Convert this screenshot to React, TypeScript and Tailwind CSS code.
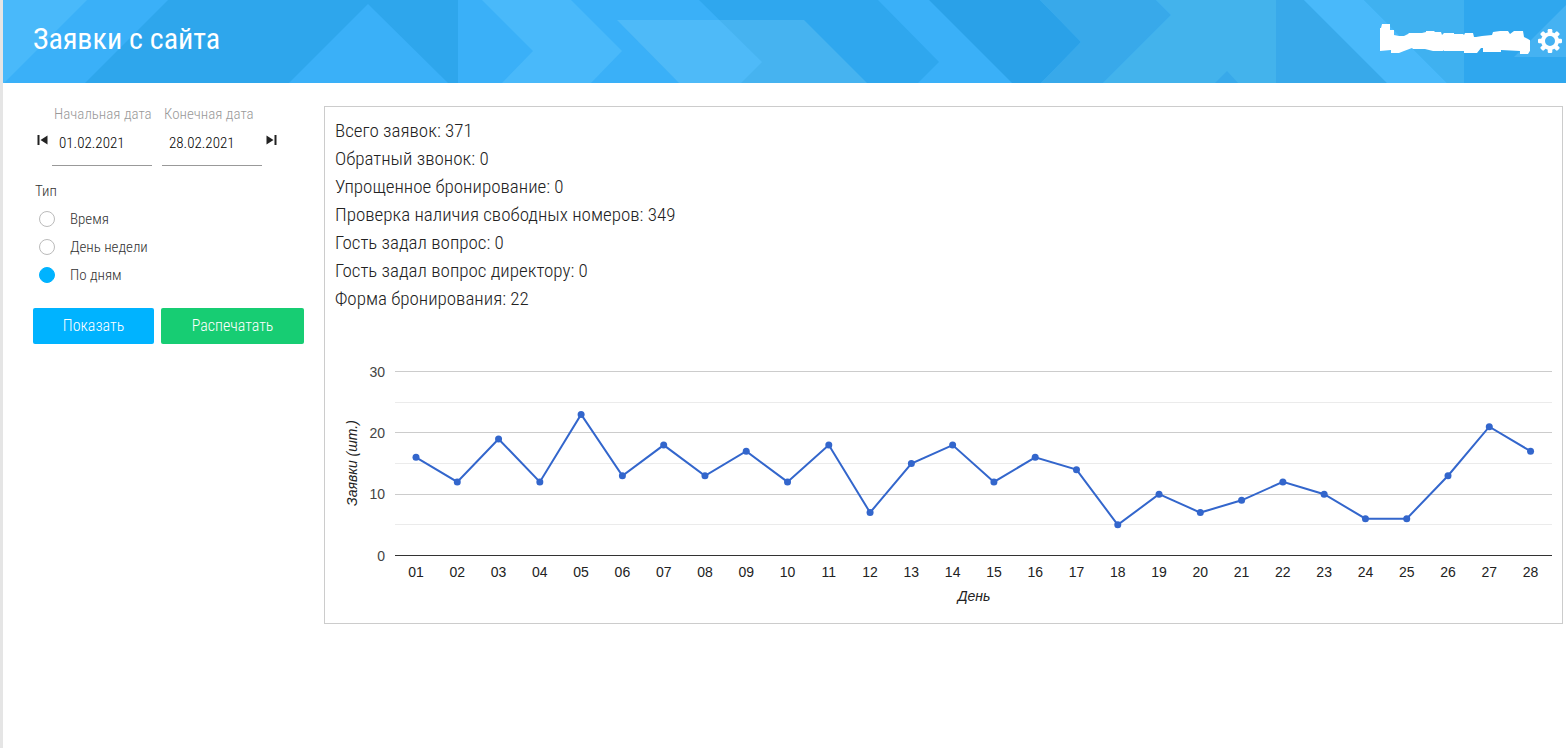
import { useState } from "react";

const stats = [
  { label: "Всего заявок", value: 371 },
  { label: "Обратный звонок", value: 0 },
  { label: "Упрощенное бронирование", value: 0 },
  { label: "Проверка наличия свободных номеров", value: 349 },
  { label: "Гость задал вопрос", value: 0 },
  { label: "Гость задал вопрос директору", value: 0 },
  { label: "Форма бронирования", value: 22 },
];

const types = [
  { id: "time", label: "Время" },
  { id: "weekday", label: "День недели" },
  { id: "days", label: "По дням" },
];

const requests = [
  16, 12, 19, 12, 23, 13, 18, 13, 17, 12, 18, 7, 15, 18, 12, 16, 14, 5, 10, 7,
  9, 12, 10, 6, 6, 13, 21, 17,
];

export default function App() {
  return (
    <div className="min-h-screen border-l-3 border-[#e5e5e5] bg-white font-['Roboto_Condensed','Liberation_Sans_Narrow',Roboto,sans-serif] font-light text-[#333]">
      <Header />
      <main className="flex items-start gap-5 pt-[23px] pr-[3px] pl-[30px]">
        <Filters />
        <section className="min-w-0 flex-1 border border-[#ccc]">
          <ul className="px-2.5 pt-2.5 text-[19px] leading-7 text-[#222]">
            {stats.map((s) => (
              <li key={s.label}>
                {s.label}: {s.value}
              </li>
            ))}
          </ul>
          <Chart />
        </section>
      </main>
    </div>
  );
}

function Header() {
  return (
    <header className="relative flex h-[83px] items-center justify-between overflow-hidden bg-[#3ab0f8] pr-1 pl-[30px] text-white">
      <HeaderPattern />
      <h1 className="relative pb-1.5 text-[30px] leading-9 font-normal">
        Заявки с сайта
      </h1>
      <div className="relative flex items-center gap-2 pb-0.5">
        <svg width="150" height="35" viewBox="0 0 150 35" fill="#fff">
          <path d="M0 5h1l1-4h8v6h4v5l5 1h5l4-2 1-1h13l4-1V8h8l1 1h6l1 3 2-2h10v1h9l1 1 1-2h8l1 4h2l6-1 10-1 1-3 7-1h8l2 3 4-3h9l1 6 4 2 3 2v8l-3 5h-8v-3l-19-1v2h-18v-4h-2l-4 5H84v-2H64v-1l-1 1H53l-8-2H33l-1-1-8 3-5 2h-8v-3l-11 1z" />
        </svg>
        <button type="button" aria-label="Настройки">
          <svg width="24" height="24" viewBox="-12 -12 24 24" fill="#fff">
            {[0, 45, 90, 135, 180, 225, 270, 315].map((a) => (
              <rect
                key={a}
                x="-2.3"
                y="-12"
                width="4.6"
                height="5"
                rx="1.2"
                transform={`rotate(${a})`}
              />
            ))}
            <circle r="7" fill="none" stroke="#fff" strokeWidth="4" />
          </svg>
        </button>
      </div>
    </header>
  );
}

function HeaderPattern() {
  return (
    <svg
      className="absolute inset-0 h-full w-full"
      viewBox="3 0 1563 83"
      preserveAspectRatio="xMinYMin slice"
      aria-hidden="true">
      <path fill="#49b9fa" d="M3 0h84L4 83H3z" />
      <path fill="#2ea6ec" d="M168 0h290v83H85z" />
      <path fill="#3ab0f8" d="M368 4l80 79H289z" />
      <path fill="#49b9fa" d="M482 0h89l51 51-31 32h-89l31-32z" />
      <path fill="#2fa7ee" d="M699 0h179l61 62-21 21H741l21-21z" />
      <path fill="#8ad8f8" fillOpacity=".25" d="M617 20h187l63 63H679z" />
      <path fill="#2aa1e8" d="M929 0h111l41 42-40 41h-29z" />
      <path fill="#38a9ea" d="M1040 0h116l15 15-68 68h-62l40-41z" />
      <path fill="#43b3ec" d="M1156 0h120v83h-173l68-68z" />
      <path fill="#38a9ea" d="M1227 71l11 12h-23z" />
      <path fill="#38a9ea" d="M1276 0h28l83 83h-111z" />
      <path fill="#49b9fa" d="M1304 0h60l83 83h-60z" />
      <path fill="#3fb1f0" d="M1364 0h100v83h-17z" />
      <path fill="#2fa7ee" d="M1464 0h102v83h-102z" />
      <path fill="#45b2f2" d="M1514 57l52-52v52z" />
    </svg>
  );
}

function Filters() {
  const [from, setFrom] = useState("01.02.2021");
  const [to, setTo] = useState("28.02.2021");
  const [type, setType] = useState("days");

  return (
    <form
      className="w-[271px] shrink-0 text-[15px]"
      onSubmit={(e) => e.preventDefault()}>
      <div className="flex items-center">
        <button type="button" aria-label="Назад" className="w-[19px] pt-2 pl-1">
          <svg width="12" height="12" viewBox="0 0 12 12" fill="#222">
            <path d="M.5 1h2v10h-2zM10.5 1.5v9L3.5 6z" />
          </svg>
        </button>
        <DateField id="from" label="Начальная дата" value={from} onChange={setFrom} />
        <div className="w-2.5" />
        <DateField id="to" label="Конечная дата" value={to} onChange={setTo} />
        <button type="button" aria-label="Вперед" className="pt-2 pl-1">
          <svg width="12" height="12" viewBox="0 0 12 12" fill="#222">
            <path d="M8.5 1h2v10h-2zM.5 1.5v9L7.5 6z" />
          </svg>
        </button>
      </div>

      <fieldset className="mt-4">
        <legend className="pl-0.5 leading-[18px]">Тип</legend>
        <div className="mt-[5px]">
          {types.map((t) => (
            <label key={t.id} className="flex h-7 items-center gap-[15px] pl-1.5">
              <input
                type="radio"
                name="type"
                checked={type === t.id}
                onChange={() => setType(t.id)}
                className="size-4 appearance-none rounded-full border border-[#bbb] checked:border-[#00b3ff] checked:bg-[#00b3ff]"
              />
              {t.label}
            </label>
          ))}
        </div>
      </fieldset>

      <div className="mt-[19px] flex gap-[7px] text-base text-white">
        <button type="submit" className="h-9 w-[121px] rounded-xs bg-[#00b3ff]">
          Показать
        </button>
        <button type="button" className="h-9 flex-1 rounded-xs bg-[#17cd73]">
          Распечатать
        </button>
      </div>
    </form>
  );
}

const DateField = ({
  id,
  label,
  value,
  onChange,
}: {
  id: string;
  label: string;
  value: string;
  onChange: (value: string) => void;
}) => {
  return (
    <div className="w-[100px]">
      <label
        htmlFor={id}
        className="block pl-0.5 leading-4 whitespace-nowrap text-[#999]">
        {label}
      </label>
      <input
        id={id}
        type="text"
        value={value}
        onChange={(e) => onChange(e.target.value)}
        className="block h-11 w-full border-b border-[#999] pb-0.5 pl-[7px] text-black outline-none"
      />
    </div>
  );
};

function Chart() {
  const left = 70;
  const right = 1227;
  const bottom = 235;
  const step = 41.28;
  const x = (i: number) => left + 21 + step * i;
  const y = (v: number) => bottom + 0.5 - (v * 184) / 30;

  return (
    <svg
      viewBox="0 0 1237 303"
      className="mt-[7px] block w-full font-['Liberation_Sans',Arial,sans-serif] text-[14px] font-normal"
      role="img"
      aria-label="Заявки по дням">
      {[5, 10, 15, 20, 25, 30].map((v) => (
        <rect
          key={v}
          x={left}
          y={Math.floor(y(v))}
          width={right - left}
          height="1"
          fill={v % 10 ? "#ebebeb" : "#ccc"}
        />
      ))}
      <rect x={left} y={bottom} width={right - left} height="1" fill="#333" />
      {[0, 10, 20, 30].map((v) => (
        <text key={v} x={left - 10} y={y(v) + 5} textAnchor="end" fill="#444">
          {v}
        </text>
      ))}
      {requests.map((_, i) => (
        <text key={i} x={x(i)} y="257" textAnchor="middle" fill="#222">
          {String(i + 1).padStart(2, "0")}
        </text>
      ))}
      <polyline
        points={requests.map((v, i) => `${x(i)},${y(v)}`).join(" ")}
        fill="none"
        stroke="#3366cc"
        strokeWidth="2"
      />
      {requests.map((v, i) => (
        <circle key={i} cx={x(i)} cy={y(v)} r="3.5" fill="#3366cc" />
      ))}
      <text x="649" y="281" textAnchor="middle" fontStyle="italic" fill="#222">
        День
      </text>
      <text
        transform="translate(32 143) rotate(-90)"
        textAnchor="middle"
        fontStyle="italic"
        fill="#222">
        Заявки (шт.)
      </text>
    </svg>
  );
}
